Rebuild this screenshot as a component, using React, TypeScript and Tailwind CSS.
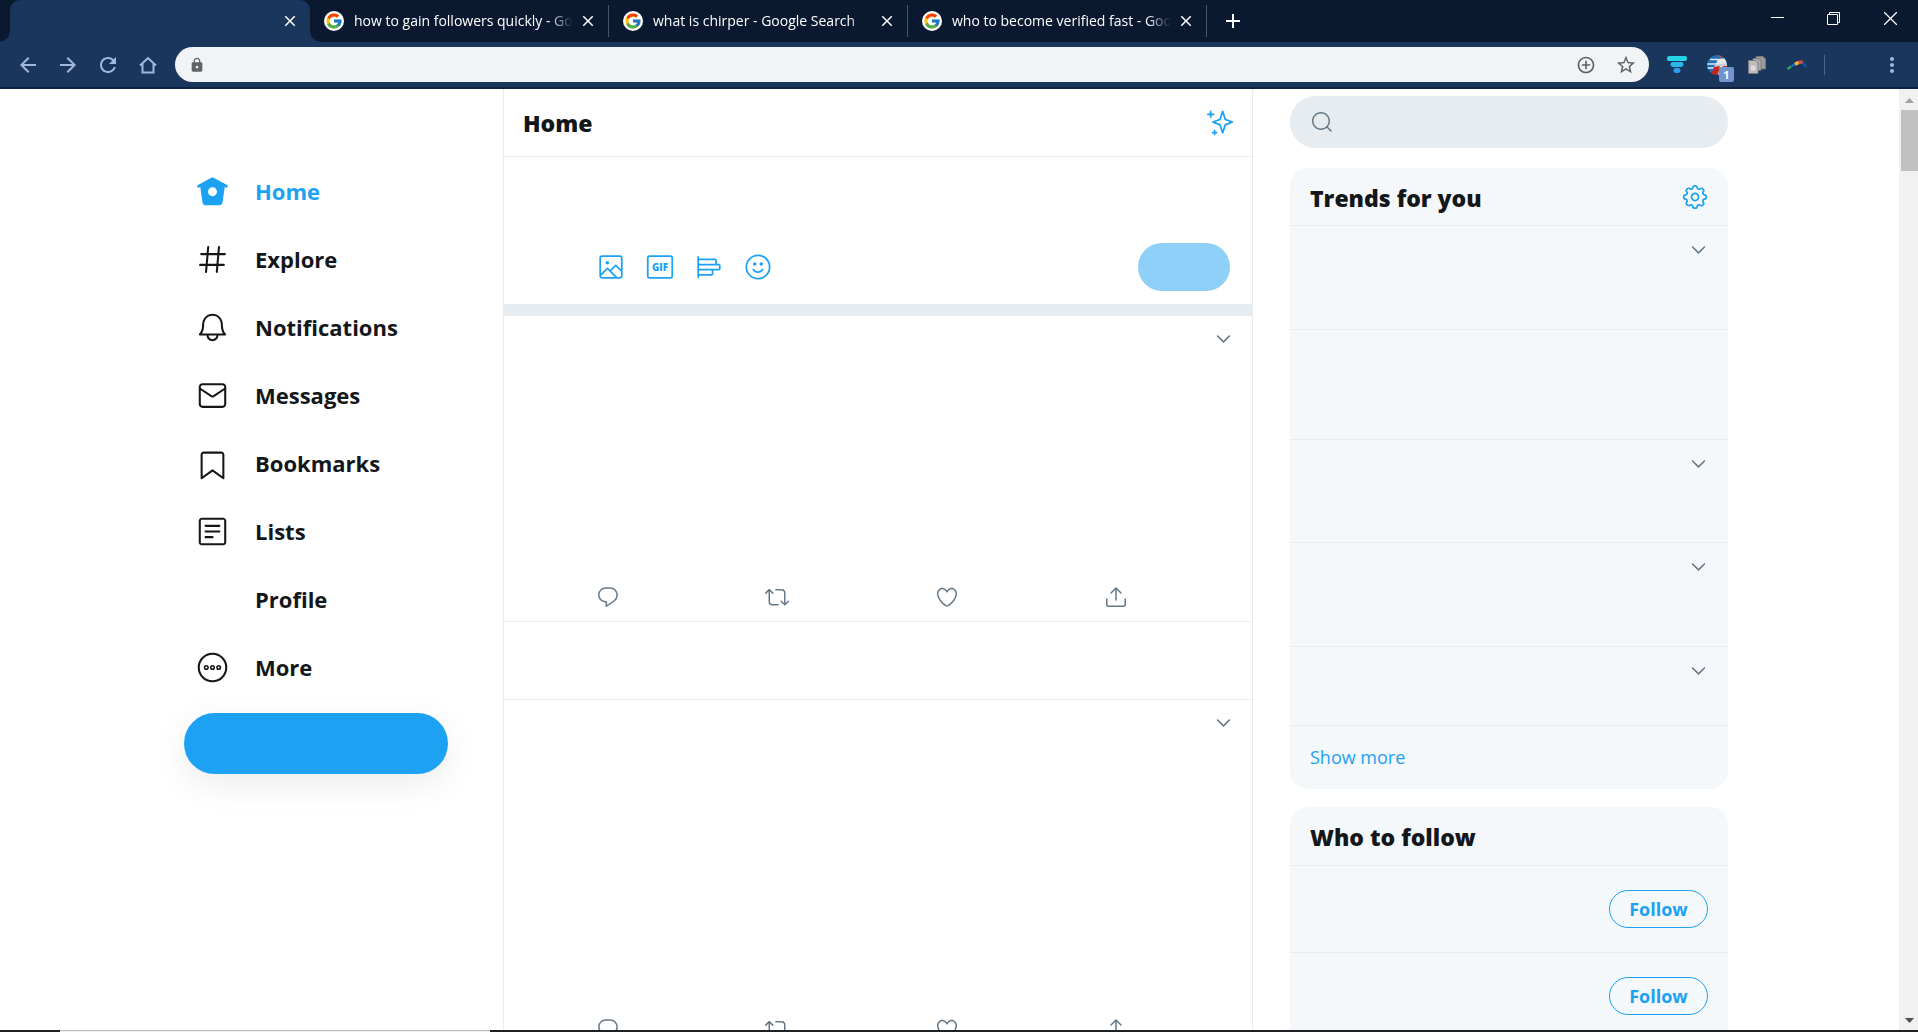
import React from "react";
import { FcGoogle } from "react-icons/fc";
import {
  MdAdd,
  MdAddCircleOutline,
  MdArrowBack,
  MdArrowForward,
  MdClose,
  MdLock,
  MdMoreVert,
  MdRefresh,
  MdStarBorder,
} from "react-icons/md";

const paths = {
  home: "M22.58 7.35L12.475 1.897c-.297-.16-.654-.16-.95 0L1.425 7.35c-.486.264-.667.87-.405 1.356.18.335.525.525.88.525.16 0 .324-.038.475-.12l.734-.396 1.59 11.25c.216 1.214 1.31 2.062 2.66 2.062h9.282c1.35 0 2.444-.848 2.662-2.088l1.588-11.225.737.398c.485.263 1.092.082 1.354-.404.263-.486.08-1.093-.404-1.355zM12 15.435c-1.795 0-3.25-1.455-3.25-3.25s1.455-3.25 3.25-3.25 3.25 1.455 3.25 3.25-1.455 3.25-3.25 3.25z",
  explore:
    "M21 7.337h-3.93l.372-4.272c.036-.412-.27-.775-.682-.812-.417-.03-.776.27-.812.683l-.383 4.4h-6.32l.37-4.27c.037-.413-.27-.776-.68-.813-.42-.03-.777.27-.813.683l-.382 4.4H3.782c-.414 0-.75.337-.75.75s.336.75.75.75H7.61l-.55 6.327H3c-.414 0-.75.336-.75.75s.336.75.75.75h3.93l-.372 4.272c-.036.412.27.775.682.812l.066.003c.385 0 .712-.295.746-.686l.383-4.4h6.32l-.37 4.27c-.036.413.27.776.682.813l.066.003c.385 0 .712-.295.746-.686l.382-4.4h3.957c.413 0 .75-.337.75-.75s-.337-.75-.75-.75H16.39l.55-6.327H21c.414 0 .75-.336.75-.75s-.336-.75-.75-.75zm-6.115 7.826h-6.32l.55-6.326h6.32l-.55 6.326z",
  bell: "M21.697 16.468c-.02-.016-2.14-1.64-2.103-6.03.02-2.532-.812-4.782-2.347-6.335C15.872 2.71 14.01 1.94 12.005 1.93h-.013c-2.004.01-3.866.78-5.242 2.174-1.534 1.553-2.368 3.802-2.346 6.334.037 4.33-2.02 5.967-2.102 6.03-.26.193-.366.53-.265.838.102.308.39.515.712.515h4.92c.102 2.31 1.997 4.16 4.33 4.16s4.226-1.85 4.327-4.16h4.922c.322 0 .61-.206.71-.514.103-.307-.003-.645-.263-.838zM12 20.478c-1.505 0-2.73-1.177-2.828-2.658h5.656c-.1 1.48-1.323 2.66-2.828 2.66zM4.38 16.32c.74-1.132 1.548-3.028 1.524-5.896-.018-2.16.644-3.982 1.913-5.267C8.91 4.05 10.397 3.437 12 3.43c1.603.008 3.087.62 4.18 1.728 1.27 1.285 1.933 3.106 1.915 5.267-.024 2.868.785 4.765 1.525 5.896H4.38z",
  mail: "M19.25 3.018H4.75C3.233 3.018 2 4.252 2 5.77v12.495c0 1.518 1.233 2.753 2.75 2.753h14.5c1.517 0 2.75-1.235 2.75-2.753V5.77c0-1.518-1.233-2.752-2.75-2.752zm-14.5 1.5h14.5c.69 0 1.25.56 1.25 1.25v.714l-8.05 5.367c-.273.18-.626.182-.9-.002L3.5 6.482v-.714c0-.69.56-1.25 1.25-1.25zm14.5 14.998H4.75c-.69 0-1.25-.56-1.25-1.25V8.24l7.24 4.83c.383.256.822.384 1.26.384.44 0 .877-.128 1.26-.383l7.24-4.83v10.022c0 .69-.56 1.25-1.25 1.25z",
  bookmark:
    "M19.9 23.5c-.157 0-.312-.05-.442-.144L12 17.928l-7.458 5.43c-.228.164-.53.19-.782.06-.25-.127-.41-.385-.41-.667V5.6c0-1.24 1.01-2.25 2.25-2.25h12.798c1.24 0 2.25 1.01 2.25 2.25v17.15c0 .282-.158.54-.41.668-.106.055-.223.082-.34.082zM12 16.25c.155 0 .31.048.44.144l6.71 4.883V5.6c0-.412-.337-.75-.75-.75H5.6c-.413 0-.75.338-.75.75v15.677l6.71-4.883c.13-.096.285-.144.44-.144z",
  list: "M19.75 22H4.25C3.01 22 2 20.99 2 19.75V4.25C2 3.01 3.01 2 4.25 2h15.5C20.99 2 22 3.01 22 4.25v15.5c0 1.24-1.01 2.25-2.25 2.25zM4.25 3.5c-.414 0-.75.337-.75.75v15.5c0 .413.336.75.75.75h15.5c.414 0 .75-.337.75-.75V4.25c0-.413-.336-.75-.75-.75H4.25zM17 8.64H7c-.414 0-.75-.337-.75-.75s.336-.75.75-.75h10c.414 0 .75.335.75.75s-.336.75-.75.75zm0 4.11H7c-.414 0-.75-.336-.75-.75s.336-.75.75-.75h10c.414 0 .75.336.75.75s-.336.75-.75.75zm-5 4.11H7c-.414 0-.75-.335-.75-.75s.336-.75.75-.75h5c.414 0 .75.337.75.75s-.336.75-.75.75z",
  image:
    "M19.75 2H4.25C3.01 2 2 3.01 2 4.25v15.5C2 20.99 3.01 22 4.25 22h15.5c1.24 0 2.25-1.01 2.25-2.25V4.25C22 3.01 20.99 2 19.75 2zM4.25 3.5h15.5c.413 0 .75.337.75.75v9.676l-3.858-3.858c-.14-.14-.33-.22-.53-.22h-.003c-.2 0-.393.08-.532.224l-4.317 4.384-1.813-1.806c-.14-.14-.33-.22-.53-.22-.193-.03-.395.08-.535.227L3.5 17.642V4.25c0-.413.337-.75.75-.75zm-.744 16.28l5.418-5.534 6.282 6.254H4.25c-.402 0-.727-.322-.744-.72zm16.244.72h-2.42l-5.007-4.987 3.792-3.85 4.385 4.384v3.703c0 .413-.337.75-.75.75z",
  poll: "M20.222 9.16h-1.334c.015-.09.028-.182.028-.277V6.57c0-.98-.797-1.777-1.778-1.777H3.5V3.358c0-.414-.336-.75-.75-.75s-.75.336-.75.75V20.83c0 .415.336.75.75.75s.75-.335.75-.75v-1.434h10.556c.98 0 1.778-.797 1.778-1.777v-2.313c0-.095-.014-.187-.028-.278h4.417c.98 0 1.778-.798 1.778-1.778v-2.31c0-.983-.797-1.78-1.778-1.78zM17.14 6.293c.152 0 .277.124.277.277v2.31c0 .154-.125.28-.278.28H3.5V6.29h13.64zm-2.807 9.014v2.312c0 .153-.125.277-.278.277H3.5v-2.868h10.556c.153 0 .277.126.277.28zM20.5 13.25c0 .153-.125.277-.278.277H3.5V10.66h16.722c.153 0 .278.124.278.277v2.313z",
  emoji:
    "M12 22.75C6.072 22.75 1.25 17.928 1.25 12S6.072 1.25 12 1.25 22.75 6.072 22.75 12 17.928 22.75 12 22.75zm0-20C6.9 2.75 2.75 6.9 2.75 12S6.9 21.25 12 21.25s9.25-4.15 9.25-9.25S17.1 2.75 12 2.75zM12 17.115c-1.892 0-3.633-.95-4.656-2.544-.224-.348-.123-.81.226-1.035.348-.226.812-.124 1.036.226.747 1.162 2.016 1.855 3.395 1.855s2.648-.693 3.396-1.854c.224-.35.688-.45 1.036-.225.35.224.45.688.226 1.036-1.025 1.594-2.766 2.545-4.658 2.545z",
  sparkle:
    "M22.772 10.506l-5.618-2.192-2.16-6.5c-.102-.307-.39-.514-.712-.514s-.61.207-.712.513l-2.16 6.5-5.62 2.192c-.287.112-.477.39-.477.7s.19.585.478.698l5.62 2.192 2.16 6.5c.102.306.39.513.712.513s.61-.207.712-.513l2.16-6.5 5.62-2.192c.287-.112.477-.39.477-.7s-.19-.585-.478-.697zm-6.49 2.32c-.208.08-.37.25-.44.46l-1.56 4.695-1.56-4.693c-.07-.21-.23-.38-.438-.462l-4.155-1.62 4.154-1.622c.208-.08.37-.25.44-.462l1.56-4.693 1.56 4.694c.07.212.23.382.438.463l4.155 1.62-4.155 1.622zM6.663 3.812h-1.88V2.05c0-.414-.337-.75-.75-.75s-.75.336-.75.75v1.762H1.5c-.414 0-.75.336-.75.75s.336.75.75.75h1.782v1.762c0 .414.336.75.75.75s.75-.336.75-.75V5.312h1.88c.415 0 .75-.336.75-.75s-.335-.75-.75-.75zm2.535 15.622h-1.1v-1.016c0-.414-.335-.75-.75-.75s-.75.336-.75.75v1.016H5.57c-.414 0-.75.336-.75.75s.336.75.75.75H6.6v1.016c0 .414.335.75.75.75s.75-.336.75-.75v-1.016h1.098c.414 0 .75-.336.75-.75s-.336-.75-.75-.75z",
  chevron:
    "M20.207 8.147c-.39-.39-1.023-.39-1.414 0L12 14.94 5.207 8.147c-.39-.39-1.023-.39-1.414 0-.39.39-.39 1.023 0 1.414l7.5 7.5c.195.196.45.294.707.294s.512-.098.707-.293l7.5-7.5c.39-.39.39-1.022 0-1.413z",
  reply:
    "M14.046 2.242l-4.148-.01h-.002c-4.374 0-7.8 3.427-7.8 7.802 0 4.098 3.186 7.206 7.465 7.37v3.828c0 .108.044.286.12.403.142.225.384.347.632.347.138 0 .277-.038.402-.118.264-.168 6.473-4.14 8.088-5.506 1.902-1.61 3.04-3.97 3.043-6.312v-.017c-.006-4.367-3.43-7.787-7.8-7.788zm3.787 12.972c-1.134.96-4.862 3.405-6.772 4.643V16.67c0-.414-.335-.75-.75-.75h-.396c-3.66 0-6.318-2.476-6.318-5.886 0-3.534 2.768-6.302 6.3-6.302l4.147.01h.002c3.532 0 6.3 2.766 6.302 6.296-.003 1.91-.942 3.844-2.514 5.176z",
  retweet:
    "M23.77 15.67c-.292-.293-.767-.293-1.06 0l-2.22 2.22V7.65c0-2.068-1.683-3.75-3.75-3.75h-5.85c-.414 0-.75.336-.75.75s.336.75.75.75h5.85c1.24 0 2.25 1.01 2.25 2.25v10.24l-2.22-2.22c-.293-.293-.768-.293-1.06 0s-.294.768 0 1.06l3.5 3.5c.145.147.337.22.53.22s.383-.072.53-.22l3.5-3.5c.294-.292.294-.767 0-1.06zm-10.66 3.28H7.26c-1.24 0-2.25-1.01-2.25-2.25V6.46l2.22 2.22c.148.147.34.22.532.22s.384-.073.53-.22c.293-.293.293-.768 0-1.06l-3.5-3.5c-.293-.294-.768-.294-1.06 0l-3.5 3.5c-.294.292-.294.767 0 1.06s.767.293 1.06 0l2.22-2.22V16.7c0 2.068 1.683 3.75 3.75 3.75h5.85c.414 0 .75-.336.75-.75s-.337-.75-.75-.75z",
  heart:
    "M12 21.638h-.014C9.403 21.59 1.95 14.856 1.95 8.478c0-3.064 2.525-5.754 5.403-5.754 2.29 0 3.83 1.58 4.646 2.73.814-1.148 2.354-2.73 4.645-2.73 2.88 0 5.404 2.69 5.404 5.755 0 6.376-7.454 13.11-10.037 13.157H12zM7.354 4.225c-2.08 0-3.903 1.988-3.903 4.255 0 5.74 7.034 11.596 8.55 11.658 1.518-.062 8.55-5.917 8.55-11.658 0-2.267-1.823-4.255-3.903-4.255-2.528 0-3.94 2.936-3.952 2.965-.23.562-1.156.562-1.387 0-.014-.03-1.425-2.965-3.954-2.965z",
  share:
    "M17.53 7.47l-5-5c-.293-.293-.768-.293-1.06 0l-5 5c-.294.293-.294.768 0 1.06s.767.294 1.06 0l3.72-3.72V15c0 .414.336.75.75.75s.75-.336.75-.75V4.81l3.72 3.72c.146.147.338.22.53.22s.384-.072.53-.22c.293-.293.293-.767 0-1.06zM19.708 21.944H4.292C3.028 21.944 2 20.916 2 19.652V14c0-.414.336-.75.75-.75s.75.336.75.75v5.652c0 .437.355.792.792.792h15.416c.437 0 .792-.355.792-.792V14c0-.414.336-.75.75-.75s.75.336.75.75v5.652c0 1.264-1.028 2.292-2.292 2.292z",
  search:
    "M21.53 20.47l-3.66-3.66C19.195 15.24 20 13.214 20 11c0-4.97-4.03-9-9-9s-9 4.03-9 9 4.03 9 9 9c2.215 0 4.24-.804 5.808-2.13l3.66 3.66c.147.146.34.22.53.22s.385-.073.53-.22c.295-.293.295-.767.002-1.06zM3.5 11c0-4.135 3.365-7.5 7.5-7.5s7.5 3.365 7.5 7.5-3.365 7.5-7.5 7.5-7.5-3.365-7.5-7.5z",
  gear: "M12 8.21c-2.09 0-3.79 1.7-3.79 3.79s1.7 3.79 3.79 3.79 3.79-1.7 3.79-3.79-1.7-3.79-3.79-3.79zm0 6.08c-1.262 0-2.29-1.026-2.29-2.29S10.74 9.71 12 9.71s2.29 1.026 2.29 2.29-1.028 2.29-2.29 2.29zM12.36 22.375h-.722c-1.183 0-2.154-.888-2.262-2.064l-.014-.147c-.025-.287-.207-.533-.472-.644-.286-.12-.582-.065-.798.115l-.116.097c-.868.725-2.253.663-3.06-.14l-.51-.51c-.836-.84-.896-2.154-.14-3.06l.098-.118c.186-.222.23-.523.122-.787-.11-.272-.358-.454-.646-.48l-.15-.014c-1.18-.107-2.067-1.08-2.067-2.262v-.722c0-1.183.888-2.154 2.064-2.262l.156-.014c.285-.025.53-.207.642-.473.11-.27.065-.573-.12-.795l-.094-.116c-.757-.908-.698-2.223.137-3.06l.512-.512c.804-.804 2.188-.865 3.06-.14l.116.098c.218.184.528.23.79.122.27-.112.452-.358.477-.643l.014-.153c.107-1.18 1.08-2.066 2.262-2.066h.722c1.183 0 2.154.888 2.262 2.064l.014.156c.025.285.206.53.472.64.277.117.58.062.794-.117l.12-.102c.867-.723 2.254-.662 3.06.14l.51.512c.836.838.896 2.153.14 3.06l-.1.118c-.188.22-.234.522-.123.788.112.27.36.45.646.478l.152.014c1.18.107 2.067 1.08 2.067 2.262v.723c0 1.183-.888 2.154-2.064 2.262l-.155.014c-.284.024-.53.205-.64.47-.113.272-.067.574.117.795l.1.12c.756.905.696 2.22-.14 3.06l-.51.51c-.807.804-2.19.864-3.06.14l-.115-.096c-.217-.183-.53-.23-.79-.122-.273.114-.455.36-.48.646l-.014.15c-.107 1.173-1.08 2.06-2.262 2.06zm-3.773-4.42c.3 0 .593.06.87.175.79.328 1.324 1.054 1.4 1.896l.014.147c.037.4.367.7.77.7h.722c.4 0 .73-.3.768-.7l.014-.148c.076-.842.61-1.567 1.392-1.892.793-.33 1.696-.182 2.333.35l.113.094c.178.148.366.18.493.18.206 0 .4-.08.546-.227l.51-.51c.284-.284.305-.73.048-1.038l-.1-.12c-.542-.65-.677-1.54-.352-2.323.326-.79 1.052-1.32 1.894-1.397l.155-.014c.397-.037.7-.367.7-.77v-.722c0-.4-.303-.73-.702-.768l-.152-.014c-.846-.078-1.57-.61-1.895-1.393-.326-.788-.19-1.678.353-2.327l.1-.118c.257-.31.236-.756-.048-1.04l-.51-.51c-.146-.147-.34-.227-.546-.227-.127 0-.315.032-.492.18l-.12.1c-.634.528-1.55.67-2.322.354-.788-.327-1.32-1.052-1.397-1.896l-.014-.155c-.035-.397-.365-.7-.767-.7h-.723c-.4 0-.73.303-.768.702l-.014.152c-.076.843-.608 1.568-1.39 1.893-.787.326-1.693.183-2.33-.35l-.118-.096c-.18-.15-.368-.18-.495-.18-.206 0-.4.08-.546.226l-.512.51c-.282.284-.303.73-.046 1.038l.1.118c.54.653.677 1.544.352 2.325-.327.788-1.052 1.32-1.895 1.397l-.156.014c-.397.037-.7.367-.7.77v.722c0 .4.303.73.702.768l.15.014c.848.078 1.573.612 1.897 1.396.325.786.19 1.675-.353 2.325l-.096.115c-.26.31-.238.756.046 1.04l.51.51c.146.147.34.227.546.227.127 0 .315-.03.492-.18l.116-.096c.406-.336.923-.524 1.453-.524z",
};

function Icon({
  d,
  className,
  children,
}: {
  d?: string;
  className: string;
  children?: React.ReactNode;
}) {
  return (
    <svg viewBox="0 0 24 24" className={className} fill="currentColor" aria-hidden="true">
      {d && <path d={d} />}
      {children}
    </svg>
  );
}

/* ---------- Browser chrome ---------- */

function Tab({ title }: { title: string }) {
  return (
    <div className="flex h-8 w-[299px] min-w-0 items-center border-r border-[#47556b] pr-[11px] pl-3.5">
      <span className="mr-2.5 flex size-5 shrink-0 items-center justify-center rounded-full bg-white">
        <FcGoogle className="size-4.5" />
      </span>
      <button
        type="button"
        className="flex-1 overflow-hidden text-left text-sm leading-5 whitespace-nowrap text-white [mask-image:linear-gradient(to_right,#000_calc(100%-24px),transparent)]"
      >
        {title}
      </button>
      <button type="button" aria-label="Close tab" className="ml-1.5 shrink-0 text-white">
        <MdClose className="size-[18px]" />
      </button>
    </div>
  );
}

function TabStrip() {
  return (
    <div className="flex h-[42px] shrink-0 bg-[#0a1930]">
      <div className="relative ml-2.5 flex w-[300px] items-center justify-end rounded-t-[10px] bg-[#1b365d] pr-[11px] before:absolute before:bottom-0 before:-left-2.5 before:size-2.5 before:bg-[radial-gradient(circle_at_0_0,transparent_9px,#1b365d_10px)] after:absolute after:-right-2.5 after:bottom-0 after:size-2.5 after:bg-[radial-gradient(circle_at_100%_0,transparent_9px,#1b365d_10px)]">
        <button type="button" aria-label="Close tab" className="text-white">
          <MdClose className="size-[18px]" />
        </button>
      </div>
      <div className="flex items-center">
        <Tab title="how to gain followers quickly - Google Search" />
        <Tab title="what is chirper - Google Search" />
        <Tab title="who to become verified fast - Google Search" />
        <button type="button" aria-label="New tab" className="ml-3.5 text-white">
          <MdAdd className="size-6" />
        </button>
      </div>
      <div className="ml-auto flex h-9 items-center text-white">
        <button type="button" aria-label="Minimize" className="flex w-14 justify-center">
          <svg viewBox="0 0 13 13" className="size-[13px]" stroke="currentColor" aria-hidden="true">
            <path d="M0 5.5h13" />
          </svg>
        </button>
        <button type="button" aria-label="Restore" className="flex w-[57px] justify-center">
          <svg viewBox="0 0 13 13" className="size-[13px]" fill="none" stroke="currentColor" aria-hidden="true">
            <path d="M.5 2.5h10v10H.5zM2.5 2.5v-2h10v10h-2" />
          </svg>
        </button>
        <button type="button" aria-label="Close" className="flex w-[56px] justify-center">
          <svg viewBox="0 0 13 13" className="size-[13px]" stroke="currentColor" strokeWidth="1.300" aria-hidden="true">
            <path d="M0 0l13 13M13 0L0 13" />
          </svg>
        </button>
      </div>
    </div>
  );
}

function Extensions() {
  return (
    <>
      <button type="button" aria-label="Filter extension" className="flex w-10 justify-center">
        <svg viewBox="0 0 20 18" className="h-[18px] w-5" aria-hidden="true">
          <rect x="0" y="0" width="20" height="5" rx="2" fill="#27d3e6" />
          <rect x="3.5" y="6" width="13" height="5" rx="2.4" fill="#29b9e9" />
          <rect x="6.5" y="12" width="7" height="5" rx="2.4" fill="#2aa0ec" />
        </svg>
      </button>
      <button type="button" aria-label="Flag extension" className="relative flex w-10 justify-center">
        <svg viewBox="0 0 20 20" className="size-5" aria-hidden="true">
          <clipPath id="globe">
            <circle cx="10" cy="10" r="10" />
          </clipPath>
          <g clipPath="url(#globe)">
            <path fill="#1c70b5" d="M0 0h20v20H0z" />
            <path d="M3 4.500h8M0 9h9M0 13h7" stroke="#dfe8f1" strokeWidth="1.300" />
            <path fill="#e4e6ea" d="M11 4l9-1v8l-13 2z" />
            <path fill="#c9ccd2" d="M8 9.500l12-1V11L7 13z" />
            <path fill="#e23b30" d="M11 0h5l-3 3.500z" />
            <path fill="#c8231f" d="M7 12l6-1-2 9H4z" />
            <path fill="#e4e6ea" d="M13 11h3l-2 9h-3z" />
            <path fill="#d33a2d" d="M16 11h4v9h-6z" />
          </g>
        </svg>
        <span className="absolute top-3 left-[22px] flex size-[15px] items-center justify-center rounded-xs bg-[#7195cf] text-[11px] leading-none font-bold text-white">
          1
        </span>
      </button>
      <button type="button" aria-label="Copy extension" className="flex w-10 justify-center">
        <svg viewBox="0 0 18 18" className="size-[18px]" stroke="#787878" strokeWidth=".8" aria-hidden="true">
          <path fill="#9b9b9b" d="M8 .5h7l2.500 2.500v10H8z" />
          <path fill="#a9a9a9" d="M5 2.500h6L13 5v9.500H5z" />
          <path fill="#bdbdbd" d="M.5 4.500h7L10 7v10.500H.5z" />
          <path fill="#dcdcdc" stroke="none" d="M3 9.500h4.500v5H3z" />
        </svg>
      </button>
      <button type="button" aria-label="Rainbow extension" className="flex w-10 justify-center">
        <svg viewBox="0 0 20 10" className="h-2.5 w-5" fill="none" strokeWidth="2.400" aria-hidden="true">
          <path stroke="#35a853" d="M.5 9L4 6.500" />
          <path stroke="#1a6bb0" d="M4 6.500L9 3.500" />
          <path stroke="#f7b93c" strokeWidth="3.400" d="M8 4.200l4-2" />
          <path stroke="#e5483a" strokeWidth="3.400" d="M11.500 2.500L16 2" />
          <path stroke="#1257a0" strokeWidth="2" d="M15.500 2.500l4 4.500" />
        </svg>
      </button>
    </>
  );
}

function Toolbar() {
  return (
    <div className="flex h-[47px] shrink-0 items-center border-b-2 border-[#0d2342] bg-[#1b365d] pl-2 text-[#a3b8dc]">
      <button type="button" aria-label="Back" className="flex w-10 justify-center">
        <MdArrowBack className="size-6" />
      </button>
      <button type="button" aria-label="Forward" className="flex w-10 justify-center">
        <MdArrowForward className="size-6" />
      </button>
      <button type="button" aria-label="Reload" className="flex w-10 justify-center">
        <MdRefresh className="size-6" />
      </button>
      <button type="button" aria-label="Browser home" className="flex w-10 justify-center">
        <svg viewBox="0 0 18 18" className="size-[18px]" fill="none" stroke="currentColor" strokeWidth="2" aria-hidden="true">
          <path d="M1 9.500L9 2l8 7.500M3.500 8v8.500h11V8" />
        </svg>
      </button>
      <div className="ml-[7px] flex h-[35px] min-w-0 flex-1 items-center rounded-full bg-[#f1f3f4] px-3.5 text-[#5f6368]">
        <MdLock className="size-4 shrink-0" />
        <input
          type="text"
          aria-label="Address"
          className="ml-2 min-w-0 flex-1 bg-transparent text-sm text-gray-900 outline-none"
        />
        <button type="button" aria-label="Zoom" className="mr-[19px]">
          <MdAddCircleOutline className="size-5" />
        </button>
        <button type="button" aria-label="Bookmark this page" className="-mr-0.5">
          <MdStarBorder className="size-5.5" />
        </button>
      </div>
      <div className="ml-2 flex shrink-0 items-center">
        <Extensions />
        <span className="ml-[7px] h-5 w-px bg-[#4a6590]" />
        <button type="button" aria-label="Menu" className="mr-3.5 ml-[55px]">
          <MdMoreVert className="size-6" />
        </button>
      </div>
    </div>
  );
}

/* ---------- Left navigation ---------- */

const navItems = [
  { label: "Home", d: paths.home, active: true },
  { label: "Explore", d: paths.explore },
  { label: "Notifications", d: paths.bell },
  { label: "Messages", d: paths.mail },
  { label: "Bookmarks", d: paths.bookmark },
  { label: "Lists", d: paths.list },
  { label: "Profile" },
  { label: "More", more: true },
];

function Nav() {
  return (
    <nav className="w-[344px] shrink-0 pt-[68px] pr-[55px] pl-[25px]">
      <ul>
        {navItems.map((item) => (
          <li key={item.label}>
            <a
              href="#"
              className={
                item.active
                  ? "flex h-17 items-center gap-[26px] pl-3 text-[22px] leading-8 font-bold text-[#1da1f2]"
                  : "flex h-17 items-center gap-[26px] pl-3 text-[22px] leading-8 font-bold text-[#14171a]"
              }
            >
              <Icon d={item.d} className="size-[33px] shrink-0">
                {item.more && (
                  <g fill="none" stroke="currentColor">
                    <circle cx="12" cy="12" r="10" strokeWidth="1.500" />
                    <circle cx="7.500" cy="12" r="1.300" strokeWidth="1.100" />
                    <circle cx="12" cy="12" r="1.300" strokeWidth="1.100" />
                    <circle cx="16.500" cy="12" r="1.300" strokeWidth="1.100" />
                  </g>
                )}
              </Icon>
              {item.label}
            </a>
          </li>
        ))}
      </ul>
      <button
        type="button"
        aria-label="Compose"
        className="mt-3 block h-[61px] w-full rounded-full bg-[#1da1f2] shadow-[0_10px_35px_rgba(0,0,0,0.08)]"
      />
    </nav>
  );
}

/* ---------- Timeline ---------- */

function Chevron({ label }: { label: string }) {
  return (
    <button type="button" aria-label={label} className="text-[#657786]">
      <Icon d={paths.chevron} className="size-[19px]" />
    </button>
  );
}

const actions = [
  { label: "Reply", d: paths.reply },
  { label: "Repost", d: paths.retweet },
  { label: "Like", d: paths.heart },
  { label: "Share", d: paths.share },
];

function Post() {
  return (
    <article className="flex h-[306px] shrink-0 flex-col border-b border-[#e6ecf0] pt-[13px] pb-3">
      <div className="flex justify-end pr-[19px]">
        <Chevron label="Post options" />
      </div>
      <div className="mt-auto flex justify-between pr-[124px] pl-[92px] text-[#657786]">
        {actions.map((a) => (
          <button key={a.label} type="button" aria-label={a.label}>
            <Icon d={a.d} className="size-6" />
          </button>
        ))}
      </div>
    </article>
  );
}

function Composer() {
  return (
    <div className="flex h-[147px] shrink-0 items-end pr-[22px] pb-[13px] pl-[93px] text-[#1da1f2]">
      <div className="flex h-12 items-center gap-[21px]">
        <button type="button" aria-label="Add photo">
          <Icon d={paths.image} className="size-7">
            <circle cx="8.868" cy="8.309" r="1.542" />
          </Icon>
        </button>
        <button type="button" aria-label="Add GIF">
          <Icon className="size-7">
            <rect x="1.500" y="2.750" width="21" height="18.500" rx="1.500" fill="none" stroke="currentColor" strokeWidth="1.500" />
            <text x="12" y="15.200" textAnchor="middle" fontSize="8.500" fontWeight="800">
              GIF
            </text>
          </Icon>
        </button>
        <button type="button" aria-label="Add poll">
          <Icon d={paths.poll} className="size-7" />
        </button>
        <button type="button" aria-label="Add emoji">
          <Icon d={paths.emoji} className="size-7">
            <circle cx="14.738" cy="9.458" r="1.478" />
            <circle cx="9.262" cy="9.458" r="1.478" />
          </Icon>
        </button>
      </div>
      <button type="button" aria-label="Post" className="ml-auto h-12 w-[92px] rounded-full bg-[#8fd0f9]" />
    </div>
  );
}

function Timeline() {
  return (
    <main className="flex min-w-0 max-w-[750px] flex-1 flex-col border-x border-[#e6ecf0]">
      <header className="flex h-17 shrink-0 items-center justify-between border-b border-[#e6ecf0] pr-[18px] pl-[19px]">
        <h2 className="text-[23px] leading-8 font-extrabold text-[#14171a]">Home</h2>
        <button type="button" aria-label="Top posts" className="text-[#1da1f2]">
          <Icon d={paths.sparkle} className="size-7" />
        </button>
      </header>
      <Composer />
      <div className="h-3 shrink-0 bg-[#e6ecf0]" />
      <Post />
      <div className="h-[78px] shrink-0 border-b border-[#e6ecf0]" />
      <div className="flex h-[354px] shrink-0 flex-col [&>article]:h-full">
        <Post />
      </div>
    </main>
  );
}

/* ---------- Right column ---------- */

const trendRows = [
  { id: 1, chevron: true, size: "h-[104px]" },
  { id: 2, chevron: false, size: "h-[110px]" },
  { id: 3, chevron: true, size: "h-[103px]" },
  { id: 4, chevron: true, size: "h-[104px]" },
  { id: 5, chevron: true, size: "h-[79px]" },
];

function Aside() {
  return (
    <aside className="mr-3 ml-[37px] w-[438px] shrink-0 pt-[7px]">
      <div className="flex h-13 items-center rounded-full bg-[#e6ecf0] px-5 text-[#657786]">
        <Icon d={paths.search} className="size-6 shrink-0" />
        <input
          type="search"
          aria-label="Search"
          className="ml-3 min-w-0 flex-1 bg-transparent text-lg outline-none"
        />
      </div>

      <section className="mt-5 overflow-hidden rounded-[18px] bg-[#f5f8fa]">
        <div className="flex h-[58px] items-center justify-between border-b border-[#e6ecf0] pr-[19px] pl-5">
          <h2 className="pt-0.5 text-[23px] leading-8 font-extrabold text-[#14171a]">Trends for you</h2>
          <button type="button" aria-label="Trend settings" className="text-[#1da1f2]">
            <Icon d={paths.gear} className="size-7" />
          </button>
        </div>
        {trendRows.map((row) => (
          <div key={row.id} className={`${row.size} flex items-start justify-end border-b border-[#e6ecf0] pt-3.5 pr-5`}>
            {row.chevron && <Chevron label="Trend options" />}
          </div>
        ))}
        <a href="#" className="flex h-[63px] items-center px-5 pb-0.5 text-lg leading-6 text-[#1da1f2]">
          Show more
        </a>
      </section>

      <section className="mt-[18px] overflow-hidden rounded-t-[18px] bg-[#f5f8fa]">
        <h2 className="flex h-[59px] items-center border-b border-[#e6ecf0] px-5 pt-0.5 text-[23px] leading-8 font-extrabold text-[#14171a]">
          Who to follow
        </h2>
        {[1, 2, 3].map((n) => (
          <div key={n} className="flex h-[87px] items-center justify-end border-b border-[#e6ecf0] pr-5">
            <button
              type="button"
              className="h-[38px] w-[99px] rounded-full border border-[#1da1f2] text-lg leading-6 font-bold text-[#1da1f2]"
            >
              Follow
            </button>
          </div>
        ))}
      </section>
    </aside>
  );
}

function Scrollbar() {
  return (
    <div className="flex w-[19px] shrink-0 flex-col items-center bg-[#f1f1f1] pl-0.5" aria-hidden="true">
      <svg viewBox="0 0 17 21" className="h-[21px] w-[17px]" fill="#a3a3a3">
        <path d="M4 14h9L8.500 9z" />
      </svg>
      <div className="h-[61px] w-full bg-[#c1c1c1]" />
      <svg viewBox="0 0 17 21" className="mt-auto h-[21px] w-[17px]" fill="#505050">
        <path d="M4 9h9l-4.500 5z" />
      </svg>
    </div>
  );
}

export default function App() {
  return (
    <div className="flex h-screen flex-col overflow-hidden bg-white font-['Segoe_UI','Open_Sans','Noto_Sans',sans-serif]">
      <TabStrip />
      <Toolbar />
      <div className="flex min-h-0 flex-1">
        <div className="flex min-w-0 flex-1 justify-center overflow-hidden">
          <Nav />
          <Timeline />
          <Aside />
        </div>
        <Scrollbar />
      </div>
      <div className="flex h-0.5 shrink-0 bg-[#1f2024]">
        <div className="ml-[60px] w-[430px] border-t border-[#bdbdbd] bg-[#ededed]" />
      </div>
    </div>
  );
}
